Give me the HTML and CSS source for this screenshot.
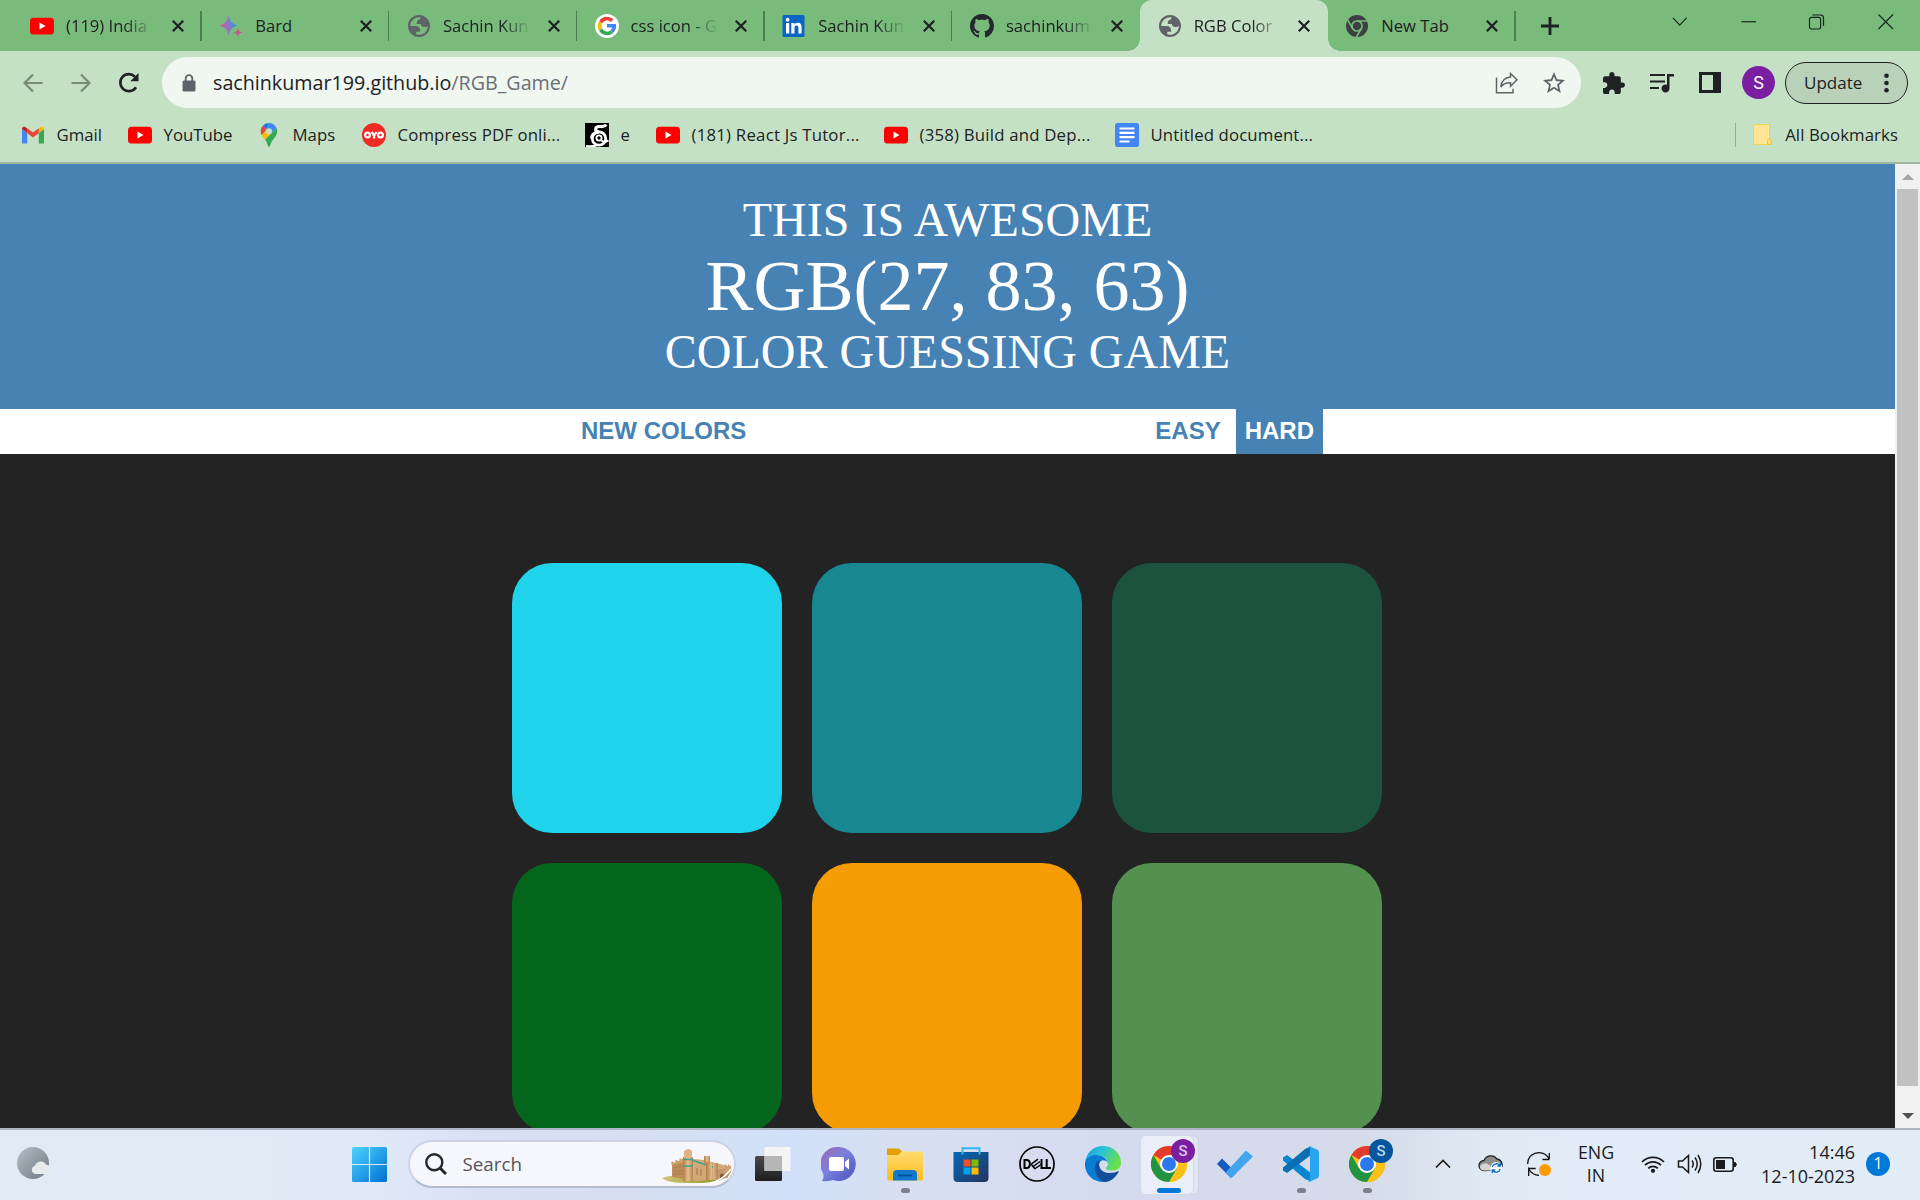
FILE: index.html
```html
<!DOCTYPE html>
<html lang="en">
<head>
<meta charset="utf-8">
<title>RGB Color Game</title>
<link rel="stylesheet" href="styles.css">
</head>
<body>
<svg width="0" height="0" class="defs">
  <defs>
    <linearGradient id="bard" x1="0" y1="0" x2="1" y2="0"><stop offset="0" stop-color="#e0566d"/><stop offset=".4" stop-color="#a070c8"/><stop offset="1" stop-color="#1a9ae0"/></linearGradient>
    <linearGradient id="win" x1="0" y1="0" x2="1" y2="1"><stop offset="0" stop-color="#4fd4ff"/><stop offset="1" stop-color="#0070d0"/></linearGradient>
    <linearGradient id="moon" x1="0" y1="0" x2="1" y2="1"><stop offset="0" stop-color="#b4bec6"/><stop offset="1" stop-color="#717a82"/></linearGradient>
    <linearGradient id="chat" x1="0" y1="0" x2="1" y2="1"><stop offset="0" stop-color="#9a6bb0"/><stop offset=".45" stop-color="#7a80dd"/><stop offset="1" stop-color="#4a50bb"/></linearGradient>
    <linearGradient id="folder" x1="0" y1="0" x2="0" y2="1"><stop offset="0" stop-color="#ffdc6e"/><stop offset="1" stop-color="#fbbc1c"/></linearGradient>
    <linearGradient id="store" x1="0" y1="0" x2="1" y2="1"><stop offset="0" stop-color="#0669b8"/><stop offset="1" stop-color="#26345c"/></linearGradient>
    <linearGradient id="edgeA" x1="0" y1="0" x2="1" y2=".4"><stop offset="0" stop-color="#1b9de2"/><stop offset=".5" stop-color="#2cc3d4"/><stop offset="1" stop-color="#68e04c"/></linearGradient>
    <linearGradient id="wall" x1="0" y1="0" x2="1" y2="0"><stop offset="0" stop-color="#b07c48"/><stop offset=".5" stop-color="#e6bf90"/><stop offset="1" stop-color="#b58453"/></linearGradient>
    <linearGradient id="grass" x1="0" y1="0" x2="1" y2="0"><stop offset="0" stop-color="#d2c878"/><stop offset=".6" stop-color="#a5a53c"/><stop offset="1" stop-color="#7f9a20"/></linearGradient>
    <linearGradient id="dark" x1="0" y1="0" x2="0" y2="1"><stop offset="0" stop-color="#4a4a4a"/><stop offset="1" stop-color="#1e1e1e"/></linearGradient>
    <symbol id="i-yt" viewBox="0 0 24 24"><rect y="3.7" width="24" height="16.8" rx="3.5" fill="#f00"/><path d="M9.5 8.500v7l6-3.500z" fill="#fff"/></symbol>
    <symbol id="i-globe" viewBox="2 2 20 20"><path fill="#5f6368" fill-rule="evenodd" d="M12 2C6.486 2 2 6.486 2 12c0 5.513 4.486 10 10 10s10-4.487 10-10c0-5.514-4.486-10-10-10zM4 12h4.400c3.407.022 4.922 1.730 4.543 5.127H9.488v2.470a8.004 8.004 0 0 0 10.498-8.083C19.327 12.504 18.332 13 17 13c-2.137 0-3.206-.916-3.206-2.750h-3.748c-.274-2.728.683-4.092 2.870-4.092 0-.975.327-1.597.811-1.970A8.004 8.004 0 0 0 4 12z"/></symbol>
    <symbol id="i-close" viewBox="0 0 14 14"><path d="M1.800 1.800l10.400 10.400M12.200 1.800L1.800 12.200" stroke="#202124" stroke-width="2.300" fill="none"/></symbol>
    <symbol id="i-chrome" viewBox="0 0 48 48"><circle cx="24" cy="24" r="24" fill="#fbc116"/><path d="M24 24L3.200 12A24 24 0 0 1 44.800 12z" fill="#e33b2e"/><path d="M24 12h20.800A24 24 0 0 1 24 48l10.400-18z" fill="#fbc116"/><path d="M3.200 12A24 24 0 0 0 24 48l10.400-18L24 24 13.600 30z" fill="#229342"/><circle cx="24" cy="24" r="12" fill="#fff"/><circle cx="24" cy="24" r="9.300" fill="#2b78ee"/></symbol>
  </defs>
</svg>

<div class="browser">
  <header class="tabstrip">
    <div class="tab"><svg class="fav"><use href="#i-yt"/></svg><span class="title fade">(119) India</span><svg class="x"><use href="#i-close"/></svg></div>
    <div class="tab"><svg class="fav" viewBox="0 0 24 24"><path d="M9.500 1.500q1.500 8.500 9 10-7.500 1.500-9 10-1.500-8.500-9-10 7.500-1.500 9-10z" fill="url(#bard)"/><path d="M19.500 16q.8 4 4.500 4.500-3.700.6-4.500 4.500-.8-3.900-4.500-4.500 3.700-.5 4.500-4.500z" transform="translate(-.5 -2)" fill="#c65a94"/></svg><span class="title">Bard</span><svg class="x"><use href="#i-close"/></svg></div>
    <div class="tab"><svg class="fav small"><use href="#i-globe"/></svg><span class="title fade">Sachin Kun</span><svg class="x"><use href="#i-close"/></svg></div>
    <div class="tab"><svg class="fav" viewBox="0 0 24 24"><circle cx="12" cy="12" r="12" fill="#fff"/><g fill="none" stroke-width="3.600"><path d="M17.200 6.600A7.400 7.400 0 0 0 5.600 8.300" stroke="#ea4335"/><path d="M5.600 8.300a7.400 7.400 0 0 0 0 7.400" stroke="#fbbc05"/><path d="M5.600 15.700a7.400 7.400 0 0 0 11.300 1.900" stroke="#34a853"/><path d="M16.900 17.600c1.700-1.500 2.500-3.600 2.400-5.900H12" stroke="#4285f4"/></g></svg><span class="title fade">css icon - G</span><svg class="x"><use href="#i-close"/></svg></div>
    <div class="tab"><svg class="fav" viewBox="0 0 24 24"><rect x=".5" y="1" width="22" height="22" rx="1.500" fill="#0a66c2"/><g fill="#fff"><rect x="4" y="9" width="3.200" height="10.500"/><circle cx="5.600" cy="5.700" r="1.900"/><path d="M9.300 9h3.100v1.500c.6-1 1.700-1.800 3.300-1.800 3.200 0 3.900 2.100 3.900 4.900v5.900h-3.200v-5.200c0-1.300 0-2.900-1.800-2.900s-2.100 1.400-2.100 2.800v5.300H9.300z"/></g></svg><span class="title fade">Sachin Kun</span><svg class="x"><use href="#i-close"/></svg></div>
    <div class="tab"><svg class="fav" viewBox="0 0 16 16"><path fill="#24292f" d="M8 0C3.580 0 0 3.580 0 8c0 3.540 2.290 6.530 5.470 7.590.4.070.55-.17.55-.38 0-.19-.01-.82-.01-1.490-2.010.37-2.530-.49-2.690-.94-.09-.23-.48-.94-.82-1.130-.28-.15-.68-.52-.01-.53.63-.01 1.080.58 1.230.82.72 1.210 1.870.87 2.330.66.070-.52.28-.87.51-1.070-1.780-.2-3.640-.89-3.640-3.950 0-.87.31-1.590.82-2.150-.08-.2-.36-1.020.08-2.120 0 0 .67-.21 2.200.82.64-.18 1.320-.27 2-.27s1.360.09 2 .27c1.530-1.040 2.200-.82 2.200-.82.44 1.100.16 1.920.08 2.120.51.56.82 1.270.82 2.150 0 3.070-1.870 3.750-3.650 3.950.29.25.54.73.54 1.480 0 1.070-.01 1.930-.01 2.200 0 .21.15.46.55.38A8.010 8.010 0 0 0 16 8c0-4.420-3.580-8-8-8z"/></svg><span class="title fade">sachinkum</span><svg class="x"><use href="#i-close"/></svg></div>
    <div class="tab active"><svg class="fav small"><use href="#i-globe"/></svg><span class="title fade">RGB Color</span><svg class="x"><use href="#i-close"/></svg></div>
    <div class="tab"><svg class="fav small" viewBox="0 0 48 48"><circle cx="24" cy="24" r="24" fill="#3c4043"/><circle cx="24" cy="24" r="11" fill="none" stroke="#79bb7b" stroke-width="3.500"/><path d="M24 13h22M14.500 29.500L3.500 10.500M33.500 29.500L22.500 48.500" stroke="#79bb7b" stroke-width="3.500"/></svg><span class="title">New Tab</span><svg class="x"><use href="#i-close"/></svg></div>
    <svg class="newtab" viewBox="0 0 18 18"><path d="M9 0v18M0 9h18" stroke="#202124" stroke-width="2.800"/></svg>
    <div class="winctl">
      <svg viewBox="0 0 16 16"><path d="M1 4l7 7.500L15 4"/></svg>
      <svg viewBox="0 0 16 16"><path d="M.5 8h15"/></svg>
      <svg viewBox="0 0 16 16"><rect x=".5" y="3.500" width="11.500" height="12" rx="2"/><path d="M3.500 1h8.500a3 3 0 0 1 3 3v8.500"/></svg>
      <svg viewBox="0 0 16 16"><path d="M.5.5l15 15M15.500.5l-15 15"/></svg>
    </div>
  </header>

  <div class="toolbar">
    <svg class="nav back" viewBox="0 0 20 20"><path d="M19.500 10H2M10 1.500L1.500 10l8.500 8.500"/></svg>
    <svg class="nav fwd" viewBox="0 0 20 20"><path d="M.5 10H18M10 1.500l8.500 8.500-8.500 8.500"/></svg>
    <svg class="nav reload" viewBox="0 0 22 22"><path d="M18 15.200A8.500 8.500 0 1 1 17 4.800" stroke-width="2.600"/><path d="M20.500 1v8.200h-8.200z" fill="#202124" stroke="none"/></svg>
    <div class="omnibox">
      <svg class="lock" viewBox="0 0 14 18"><rect x=".5" y="6.500" width="13" height="11" rx="1.500" fill="#5f6368"/><path d="M3.700 7V4.500a3.300 3.300 0 0 1 6.600 0V7" fill="none" stroke="#5f6368" stroke-width="1.800"/></svg>
      <span class="url">sachinkumar199.github.io<i>/RGB_Game/</i></span>
      <svg class="share" viewBox="0 0 24 22"><g fill="none" stroke="#5f6368" stroke-width="1.500"><path d="M1.500 5.500v15.200h16.500v-4"/><path d="M15.500 1.500l6.500 6.300-6.500 6.500v-3.600c-4.500-.2-7.500 1-9.700 4.300.5-5.300 3.500-9.300 9.700-10z"/></g></svg>
      <svg class="star" viewBox="2 2 20 19"><path fill="#5f6368" d="M22 9.240l-7.190-.62L12 2 9.190 8.630 2 9.240l5.460 4.730L5.820 21 12 17.270 18.180 21l-1.630-7.030L22 9.240zM12 15.400l-3.760 2.270 1-4.280-3.320-2.880 4.380-.38L12 6.100l1.710 4.040 4.380.38-3.320 2.880 1 4.280L12 15.400z"/></svg>
    </div>
    <svg class="puzzle" viewBox="2 1 21 21"><path fill="#202124" d="M20.500 11H19V7c0-1.100-.9-2-2-2h-4V3.500C13 2.120 11.880 1 10.500 1S8 2.120 8 3.500V5H4c-1.100 0-1.990.9-1.990 2v3.800H3.500c1.490 0 2.700 1.210 2.700 2.700s-1.210 2.700-2.700 2.700H2V20c0 1.100.9 2 2 2h3.800v-1.500c0-1.490 1.210-2.700 2.700-2.700 1.490 0 2.700 1.210 2.700 2.700V22H17c1.100 0 2-.9 2-2v-4h1.500c1.380 0 2.500-1.120 2.500-2.500S21.880 11 20.500 11z"/></svg>
    <svg class="queue" viewBox="0 0 24 20"><path d="M0 2h15M0 8.500h15M0 15h9" stroke="#202124" stroke-width="2.200"/><path d="M24 1v2.500h-4.500V15A4 4 0 1 1 17 11.700V1z" fill="#202124"/></svg>
    <svg class="panel" viewBox="0 0 22 21"><path fill="#202124" fill-rule="evenodd" d="M0 0h22v21H0zM3 3v15h11V3z"/></svg>
    <div class="avatar">S</div>
    <div class="update"><span>Update</span><svg viewBox="0 0 5 20"><circle cx="2.500" cy="2.700" r="2.300"/><circle cx="2.500" cy="10" r="2.300"/><circle cx="2.500" cy="17.300" r="2.300"/></svg></div>
  </div>

  <div class="bookmarks">
    <div class="bm"><svg viewBox="0 0 24 24"><path d="M1 20.500V6l5.200 4v10.500z" fill="#4285f4"/><path d="M17.800 20.500V10L23 6v14.500z" fill="#34a853"/><path d="M17.800 10V5.500l2-1.400c1.500-.9 3.200.1 3.200 1.900z" fill="#fbbc04"/><path d="M6.200 10V5.200L12 9.500l5.800-4.300V10L12 14.500z" fill="#ea4335"/><path d="M1 6c0-2 1.800-2.800 3.200-1.900l2 1.400V10z" fill="#c5221f"/></svg><span>Gmail</span></div>
    <div class="bm"><svg><use href="#i-yt"/></svg><span>YouTube</span></div>
    <div class="bm"><svg viewBox="0 0 24 24"><path d="M12 0a8.300 8.300 0 0 0-6.400 3l4 3.600z" fill="#1a73e8"/><path d="M5.600 3A8.200 8.200 0 0 0 4.800 12.200L9.600 6.600z" fill="#ea4335"/><path d="M12 0c3.400 0 6.300 2.100 7.600 5L14 10.500 9.600 6.600z" fill="#4285f4"/><path d="M4.800 12.200c.7 1.700 2 3 3.200 4.600L14.500 10 9 7.200z" fill="#fbbc04"/><path d="M19.600 5c1 2.400.8 5-.4 7.200-1.700 3.200-4.200 4.700-5.400 8.500C13 23 12.700 24 12 24s-1-1-1.800-3.300C9.700 19.200 9 18 8 16.800z" fill="#34a853"/><circle cx="12" cy="8.300" r="3.100" fill="#c5e1c5"/></svg><span>Maps</span></div>
    <div class="bm wide-1"><svg viewBox="0 0 24 24"><circle cx="12" cy="12" r="12" fill="#ee2a24"/><g fill="none" stroke="#fff" stroke-width="2.200"><circle cx="5.500" cy="12" r="2.400"/><circle cx="18.500" cy="12" r="2.400"/><path d="M9.600 9l2.500 3.500L14.500 9M12.100 12.500V15.500"/></g></svg><span>Compress PDF onli...</span></div>
    <div class="bm"><svg viewBox="0 0 24 24"><rect width="24" height="24" fill="#000"/><g fill="none" stroke="#fff"><path d="M21 1.500c-1 2.500-3.500 2-6.500 2-5 0-5 5-.5 5.500C8.500 9.500 6.500 12 6.500 15.500" stroke-width="3.200"/><circle cx="14" cy="15.500" r="6.700" stroke-width="2.800"/><circle cx="14" cy="15" r="2.600" stroke-width="1.800"/><path d="M1 23c4 .5 8 .5 11-1M16.500 17.500c2 2 5 1 7 0" stroke-width="2"/></g></svg><span>e</span></div>
    <div class="bm wide-3"><svg><use href="#i-yt"/></svg><span>(181) React Js Tutor...</span></div>
    <div class="bm wide-2"><svg><use href="#i-yt"/></svg><span>(358) Build and Dep...</span></div>
    <div class="bm wide-1"><svg viewBox="0 0 24 24"><rect width="24" height="24" rx="2.500" fill="#4285f4"/><path d="M4.500 5.500h15M4.500 9.800h15M4.500 14.200h15M4.500 18.500h10" stroke="#fff" stroke-width="2.200"/></svg><span>Untitled document...</span></div>
    <div class="bm all"><svg viewBox="0 0 24 24"><path d="M3.500 1.500h16v15.500h1.500v4.500H3.500z" fill="#ffe594" stroke="#f3cf52"/><path d="M17.500 21.500v-4c0-2 3.500-2 3.500 0v4z" fill="#fde08a" stroke="#eec035"/></svg><span>All Bookmarks</span></div>
  </div>

  <div class="viewport">
    <main class="page">
      <h1>This is awesome<br><span class="rgb">RGB(27, 83, 63)</span><br>color guessing game</h1>
      <div class="modes">
        <button class="reset">New Colors</button>
        <button class="easy">Easy</button>
        <button class="hard selected">Hard</button>
      </div>
      <div class="squares">
        <div class="sq cyan"></div><div class="sq teal"></div><div class="sq pine"></div>
        <div class="sq green"></div><div class="sq orange"></div><div class="sq leaf"></div>
      </div>
    </main>
    <div class="scrollbar">
      <svg viewBox="0 0 12 6"><path d="M0 6l6-6 6 6z" fill="#a3a3a3"/></svg>
      <div class="thumb"></div>
      <svg viewBox="0 0 12 6"><path d="M0 0l6 6 6-6z" fill="#505050"/></svg>
    </div>
  </div>
</div>

<footer class="taskbar">
  <svg class="weather" viewBox="0 0 34 34"><circle cx="16" cy="16" r="16" fill="url(#moon)"/><path d="M18 27a4.300 4.300 0 0 1 0-8.300 6 6 0 0 1 11-1.200A4.800 4.800 0 0 1 29.500 27z" fill="#e8eaec"/></svg>
  <svg class="start" viewBox="0 0 35 35"><rect width="35" height="35" rx="1.500" fill="url(#win)"/><path d="M17.500 0v35M0 17.500h35" stroke="#dfe8f6" stroke-width="1.200"/></svg>
  <div class="search">
    <svg class="lens" viewBox="0 0 22 22"><circle cx="9.300" cy="9.300" r="8" fill="none" stroke="#262626" stroke-width="2.400"/><path d="M15 15l6 6" stroke="#262626" stroke-width="3"/></svg>
    <span>Search</span>
    <svg class="fort" viewBox="0 0 70 35"><path d="M0 29c8-3 20-3 34-3s27 0 28 2-7 6-26 6S6 34 0 29z" fill="url(#grass)"/><path d="M10 16l12-7 20 2 24 6v12l-30 3-26-4z" fill="#d3a878"/><path d="M10 16l12-6v20l-12-2z" fill="#bd8d5a"/><path d="M11 19l10-2M11 22h10M11 25h10" stroke="#a97944" stroke-width=".8"/><path d="M9.500 16v-3.500h2v1.500l2-1v-2h2v1.500l2-1v-2h2V11l3-1v3z" fill="#d0a06b"/><path d="M21 8h10v24H21z" fill="url(#wall)"/><path d="M22 2q5-4 8 0v7h-8z" fill="#dfb383"/><path d="M21 17h10M21 10.500h10M31 11.500l21 7" stroke="#38a396" stroke-width="1.400"/><path d="M42 7h6v8h-6z" fill="url(#wall)"/><path d="M44 13h6v18h-6zM51 14h5v17h-5z" fill="url(#wall)"/><path d="M56 20h14l-4 8-10 3z" fill="#c4976a"/><path d="M63 20v-4.500h1.500v1.500h1.500v-1.500h1.500v1.500H69v7h-6z" fill="#cfa172"/><path d="M58 30v-4q2-3 4 0v3z" fill="#7d5836"/><path d="M35 19v7M39 20v7" stroke="#a27445" stroke-width="1"/><path d="M48 34q12-2 21-14" fill="none" stroke="#fff" stroke-width="1.500"/></svg>
  </div>
  <div class="apps">
    <div class="app"><svg viewBox="0 0 36 36"><rect y="10" width="27" height="25" rx="1.500" fill="url(#dark)"/><rect x="9.500" y="1" width="26" height="24" rx="1" fill="#f4f4f4"/><rect x="9.500" y="10" width="17.500" height="15" fill="#b6b6b6"/></svg></div>
    <div class="app"><svg viewBox="0 0 36 36"><path d="M18 1a17 17 0 1 1-6 33c-3 1-7 1.500-11 1 1.500-2.500 2-4.500 1-8A17 17 0 0 1 18 1z" fill="url(#chat)"/><rect x="8" y="11" width="15" height="14" rx="2" fill="#fff"/><path d="M24 16l4-3.500v11L24 20z" fill="#fff"/></svg></div>
    <div class="app open"><svg viewBox="0 0 36 36"><path d="M0 2.500h12l4 4V14H0z" fill="#e0a105"/><path d="M0 9h11l4-3.500h21v27a2 2 0 0 1-2 2H2a2 2 0 0 1-2-2z" fill="url(#folder)"/><path d="M6 34.500V28a4 4 0 0 1 4-4h16a4 4 0 0 1 4 4v6.500z" fill="#1177cf"/><path d="M11 29.500h14" stroke="#0a4f94" stroke-width="1.800"/></svg></div>
    <div class="app"><svg viewBox="0 0 36 36"><path d="M.5 6h35v26a4 4 0 0 1-4 4h-27a4 4 0 0 1-4-4z" fill="url(#store)"/><path d="M9.500 8.500V2.200h17v6.300" fill="none" stroke="#32b9ee" stroke-width="2"/><path fill="#f25022" d="M10.500 13.500h7v7h-7z"/><path fill="#7fba00" d="M18.500 13.500h7v7h-7z"/><path fill="#00a4ef" d="M10.500 21.500h7v7h-7z"/><path fill="#ffb900" d="M18.500 21.500h7v7h-7z"/></svg></div>
    <div class="app"><svg viewBox="0 0 36 36"><circle cx="18" cy="18" r="17" fill="none" stroke="#000" stroke-width="1.700"/><g fill="none" stroke="#000" stroke-width="2"><path d="M5.500 14v8h2c4.500 0 4.500-8 0-8zM22.500 13v9.100h4.200M27.700 13v9.100h4.200"/><path d="M12 18.300l7-5.200M13.500 21l7.500-5.500M15.500 23l6.500-4.500M12 18.300l4 4.500" stroke-width="1.500"/></g></svg></div>
    <div class="app"><svg viewBox="0 0 36 36"><path d="M18 0C8 0 1 7 0 17c2-5 7-8 12-8 7 0 11 4 11 9 0 2-2 3-2 4.500 0 1.500 3 2 6 2 6 0 9-3 9-8C36 7 28 0 18 0z" fill="url(#edgeA)"/><path d="M0 17C1 11 7 8.500 12 9c6 .3 10 4 11 8-2-4-9-4-9 3 0 8 8 12 14 11-3 3-6 5-10 5C8 36-1 28 0 17z" fill="#0b7cd4"/><path d="M10 22c0-4 2-7 4.500-8-2 7 2 13 10 13 4 0 7-1 8.500-2 1.500 0 .5 1 0 2-3 5-8 9-13 9C14 35 10 28 10 22z" fill="#114f9a"/></svg></div>
    <div class="app current"><svg><use href="#i-chrome"/></svg><b class="badge purple">S</b></div>
    <div class="app"><svg viewBox="0 0 36 36"><path d="M0 18l5-5.500L19.500 27 14 32z" fill="#185abd"/><path d="M8.500 26.500L29 4.500l7 6L14.500 32z" fill="#41a5ee"/></svg></div>
    <div class="app open"><svg viewBox="0 0 36 36"><path d="M4 9l-4 2.500v3L22 33l6 2.500V27z" fill="#0a86d1"/><path d="M4 27l-4-2.500v-3L22 3l6-2.500V9z" fill="#0b6fb3"/><path d="M26 0l8 3.500q2 1 2 3v23q0 2-2 3L26 36q-1 0 1-2V2z" fill="#27a5f0"/></svg></div>
    <div class="app open"><svg><use href="#i-chrome"/></svg><b class="badge blue">S</b></div>
  </div>
  <div class="tray">
    <svg class="chev" viewBox="0 0 16 10"><path d="M1 8.500l7-7 7 7" fill="none" stroke="#1b1b1b" stroke-width="1.700"/></svg>
    <svg class="cloud" viewBox="0 0 26 20"><path d="M6 16.500a5 5 0 0 1 0-10 7.500 7.500 0 0 1 13-1.500 6 6 0 0 1 3 10.500z" fill="#8d8d8d" stroke="#222" stroke-width="1.300"/><path d="M1.800 13c2-4 6-5 9.500-2l3 5.500H6c-2 0-4-1.500-4.200-3.500z" fill="#d4d4d4"/><circle cx="18.300" cy="14" r="6" fill="#fff"/><path d="M14.300 13a4.200 4.200 0 0 1 7.500-1.500M22.300 15a4.200 4.200 0 0 1-7.500 1.500M22.300 9v3h-3M14.300 19v-3h3" fill="none" stroke="#1070c5" stroke-width="1.400"/></svg>
    <svg class="sync" viewBox="0 0 24 24"><path d="M.7 12C.7 4 7 .7 12 .7c4.500 0 8 2.300 10.300 6.500V1M22.300 7.500H15.500M12 23.300c-4.500 0-8-2.300-10.300-6.300V24M1.700 16.500h7" fill="none" stroke="#111" stroke-width="1.300"/><circle cx="18" cy="18" r="6" fill="#ff9a00"/></svg>
    <div class="lang">ENG<br>IN</div>
    <svg class="wifi" viewBox="0 0 24 18"><g fill="none" stroke="#1b1b1b" stroke-width="1.700"><path d="M1 7a15.500 15.500 0 0 1 22 0M4 10.200a11.300 11.300 0 0 1 16 0M7.200 13.300a6.800 6.800 0 0 1 9.600 0"/></g><circle cx="12" cy="15.800" r="2.100" fill="#1b1b1b"/></svg>
    <svg class="vol" viewBox="0 0 24 20"><g fill="none" stroke="#1b1b1b" stroke-width="1.500"><path d="M1 7h4l6-5.500v17L5 13H1z"/><path d="M14.500 6.500q2.500 3.500 0 7M17.500 3.500q4.500 6.500 0 13M20.500 1q5.500 9 0 18"/></g></svg>
    <svg class="batt" viewBox="0 0 24 15"><rect x=".8" y=".8" width="19.400" height="13.400" rx="2.500" fill="none" stroke="#1b1b1b" stroke-width="1.600"/><rect x="3" y="3" width="9" height="9" fill="#1b1b1b"/><path d="M21 5h1.500L24 7.500 22.500 10H21z" fill="#1b1b1b"/></svg>
    <div class="clock">14:46<br>12-10-2023</div>
    <div class="notif">1</div>
  </div>
</footer>
</body>
</html>
```
FILE: styles.css
```css
* { box-sizing: border-box; }
body {
  margin: 0;
  width: 1920px;
  height: 1200px;
  overflow: hidden;
  display: flex;
  flex-direction: column;
  font-family: "Open Sans", "Noto Sans", sans-serif;
  color: #202124;
}
svg { display: block; flex: none; }
.defs { position: absolute; }

.browser { flex: 1; min-height: 0; display: flex; flex-direction: column; background: #c5e1c5; }

/* Tab strip */
.tabstrip { height: 51px; flex: none; display: flex; align-items: center; background: #79bb7b; padding-left: 14px; }
.tab { width: 187.7px; height: 51px; display: flex; align-items: center; padding-left: 17.500px; flex: none; }
.tab:first-child { padding-left: 16px; }
.tab::after { content: ""; width: 1.500px; height: 30px; background: #4f7c51; margin-left: 15px; }
.fav { width: 24px; height: 24px; }
.fav.small { width: 22px; height: 22px; margin: 0 1px; }
.title { width: 90px; margin-left: 12px; font-size: 16.600px; line-height: 24px; white-space: nowrap; }
.fade { -webkit-mask-image: linear-gradient(90deg, #000 58px, transparent 88px); mask-image: linear-gradient(90deg, #000 58px, transparent 88px); }
.tab .x { width: 14px; height: 14px; margin-left: 15px; }
.tab.active { background: #c5e1c5; border-radius: 12px 12px 0 0; }
.tab.active::after { visibility: hidden; }
.tab:has(+ .active)::after { visibility: hidden; }
.tab:has(+ .active) { background: radial-gradient(circle at 0 0, transparent 11.500px, #c5e1c5 12px) right bottom / 12px 12px no-repeat; }
.active + .tab { background: radial-gradient(circle at 100% 0, transparent 11.500px, #c5e1c5 12px) left bottom / 12px 12px no-repeat; }
.newtab { width: 18px; height: 18px; margin-left: 25px; }
.winctl { margin-left: auto; display: flex; gap: 53px; padding: 0 27px 7px 0; }
.winctl svg { width: 15.500px; height: 15.500px; fill: none; stroke: #16261a; stroke-width: 1.200; overflow: visible; }

/* Toolbar */
.toolbar { height: 63px; flex: none; display: flex; align-items: center; padding-left: 23px; }
.nav { width: 20px; height: 20px; fill: none; stroke: #768c76; stroke-width: 2.200; }
.fwd { margin-left: 28px; }
.reload { width: 22px; height: 22px; margin-left: 27px; stroke: #202124; }
.omnibox { width: 1419px; height: 51px; margin-left: 22px; border-radius: 26px; background: #f0f7f0; display: flex; align-items: center; padding: 0 16px 0 20px; }
.lock { width: 14px; height: 18px; }
.url { margin-left: 17px; font-size: 19.700px; }
.url i { font-style: normal; color: #6b7075; }
.share { width: 24px; height: 22px; margin-left: auto; }
.star { width: 22px; height: 21px; margin-left: 24px; }
.puzzle { width: 22px; height: 22px; margin-left: 22px; }
.queue { width: 24px; height: 20px; margin-left: 25px; }
.panel { width: 22px; height: 21px; margin-left: 25px; }
.avatar { width: 33px; height: 33px; margin-left: 21px; border-radius: 50%; background: #7b1fa2; color: #fff; font: 18px/33px Roboto, sans-serif; text-align: center; }
.update { width: 123px; height: 42px; margin-left: 10px; border: 1.500px solid #202124; border-radius: 21px; background: #b8d1b8; display: flex; align-items: center; justify-content: space-between; padding: 0 18px 0 18px; font-size: 17px; }
.update svg { width: 5px; height: 20px; fill: #202124; }

/* Bookmarks bar */
.bookmarks { height: 50px; flex: none; border-bottom: 2px solid #9fb5a0; display: grid; grid-template-columns: 107px 129px 105px 223px 71px 228px 231px 230px 1fr; padding: 0 22px 6px 21px; align-items: center; }
.bm { display: flex; align-items: center; gap: 11.500px; font-size: 16.800px; line-height: 24px; white-space: nowrap; }
.bm svg { width: 24px; height: 24px; }
.bm.wide-1 { letter-spacing: .12px; }
.bm.wide-2 { letter-spacing: .2px; }
.bm.wide-3 { letter-spacing: .22px; }
.bm.all { justify-self: end; border-left: 1.500px solid #95ae96; padding-left: 14px; letter-spacing: .08px; }

/* Page */
.viewport { flex: 1; min-height: 0; display: flex; }
.page { flex: 1; overflow: hidden; background: #232323; }
h1 { margin: 0; height: 245px; padding: 30px 0; background: #4682b4; color: #fff; font: normal 48px/1.1 "Liberation Serif", serif; text-align: center; text-transform: uppercase; }
.rgb { font-size: 72px; line-height: 1.1; }
.modes { height: 45px; background: #fff; display: flex; padding-left: 572px; }
.modes button { border: 0; background: none; padding: 0 9px 2px; color: #4682b4; font: bold 24px/43px "Liberation Sans", sans-serif; text-transform: uppercase; white-space: nowrap; }
.easy { margin-left: 391px; }
.modes .hard { margin-left: 6px; background: #4682b4; color: #fff; }
.squares { display: grid; grid-template-columns: repeat(3, 270px); grid-auto-rows: 270px; gap: 30px; width: 870px; margin: 109px auto 0 512px; }
.sq { border-radius: 40px; }
.cyan { background: #1fd3ea; }
.teal { background: #178891; }
.pine { background: #1b533f; }
.green { background: #06651c; }
.orange { background: #f59c05; }
.leaf { background: #54904f; }
.scrollbar { width: 25px; background: #f0f0f0; display: flex; flex-direction: column; align-items: center; padding: 10px 0 9px; }
.scrollbar svg { width: 12px; height: 6px; }
.thumb { width: 21px; height: 897px; margin: 9px 0 auto; background: #c1c1c1; }

/* Taskbar */
.taskbar { height: 72px; flex: none; display: flex; align-items: center; border-top: 2px solid #adb5c4; padding: 0 0 2px 17px; color: #1b1b1b;
  background: linear-gradient(90deg, #e0ebf5 0, #e0eaf6 370px, #d8e0f4 480px, #d6dff2 640px, #d1e0f8 790px, #d7dff1 900px, #d5dbef 1130px, #d5dbe9 1360px, #dee9f3 1480px, #e1ecf8 1600px, #e2ecf7 100%); }
.weather { width: 34px; height: 34px; }
.start { width: 35px; height: 35px; margin-left: 301px; }
.search { width: 328px; height: 48px; margin-left: 21px; border: 2px solid #cbd2e6; border-bottom-color: #b3bccf; border-radius: 24px; background: #f5f7fd; display: flex; align-items: center; padding-left: 15px; }
.lens { width: 22px; height: 22px; }
.search span { margin-left: 15.500px; font-size: 18.800px; color: #555; }
.fort { width: 70px; height: 35px; margin: 4px 2px 0 auto; }
.apps { display: flex; margin-left: 4px; }
.app { width: 66px; height: 68px; display: grid; place-items: center; position: relative; }
.app svg { width: 36px; height: 36px; }
.app.open::after { content: ""; position: absolute; left: 28.500px; bottom: 5px; width: 9px; height: 5px; border-radius: 3px; background: #7d818b; }
.app.current::before { content: ""; position: absolute; left: 4px; top: 5px; width: 52px; height: 58px; border: 1px solid #d3d9e8; border-radius: 6px; background: #eaeef8; box-shadow: 5px 0 0 -1px #e1e6f3, 5px 0 0 0 #ccd3e4; }
.app.current::after { content: ""; position: absolute; left: 21px; bottom: 5px; width: 24px; height: 5px; border-radius: 3px; background: #0078d7; }
.app.current svg { position: relative; }
.badge { position: absolute; left: 35px; top: 9px; width: 24px; height: 24px; border-radius: 50%; color: #dcc4ea; font: 500 15px/24px Roboto, sans-serif; text-align: center; }
.purple { background: #7b1fa2; }
.blue { background: #05579b; color: #b8d4ec; }
.tray { display: flex; align-items: center; margin-left: 35px; flex: 1; }
.chev { width: 16px; height: 10px; }
.cloud { width: 26px; height: 20px; margin-left: 27px; }
.sync { width: 24px; height: 24px; margin-left: 23px; }
.lang { width: 40px; margin-left: 25px; text-align: center; font-size: 17.800px; line-height: 23px; }
.wifi { width: 24px; height: 18px; margin-left: 25px; }
.vol { width: 25px; height: 20px; margin-left: 12px; }
.batt { width: 24px; height: 15px; margin-left: 11px; }
.clock { width: 110px; margin-left: 8px; text-align: right; font-size: 18px; line-height: 24px; }
.notif { width: 24px; height: 24px; margin-left: 11px; border-radius: 50%; background: #0078d7; color: #fff; font-size: 16px; line-height: 23px; text-align: center; }
```
